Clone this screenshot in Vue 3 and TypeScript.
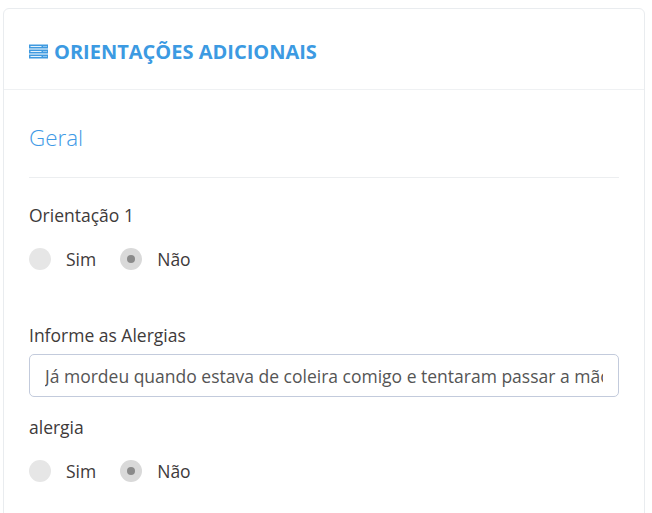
<script setup lang="ts">
const radios = [
  { label: 'Sim', checked: false },
  { label: 'Não', checked: true },
]
const groupsA = 'Orientação 1'
const groupsB = 'alergia'
const value = 'Já mordeu quando estava de coleira comigo e tentaram passar a mão nele'
</script>

<template>
  <div class="page">
    <section class="card">
      <header class="head">
        <svg class="icon" viewBox="0 0 19 15" width="19" height="15" aria-hidden="true">
          <g fill="#3f9ae0">
            <path d="M0 .5h19v4H0zM0 5.5h19v4H0zM0 10.5h19v4H0z" />
          </g>
          <g fill="#e3f1fc">
            <path d="M1.5 2h11v1h-11zM1.5 7h11v1h-11zM1.5 12h11v1h-11z" />
            <path d="M14.5 2h1v1h-1zM16.5 2h1v1h-1zM14.5 7h1v1h-1zM16.5 7h1v1h-1zM14.5 12h1v1h-1zM16.5 12h1v1h-1z" />
          </g>
        </svg>
        <h1 class="title">ORIENTAÇÕES ADICIONAIS</h1>
      </header>
      <div class="body">
        <h2 class="sub">Geral</h2>
        <hr class="rule" />
        <div class="label first">{{ groupsA }}</div>
        <div class="radios">
          <div v-for="r in radios" :key="r.label" class="radio">
            <span class="dot" :class="{ on: r.checked }"></span>
            <span class="rlabel">{{ r.label }}</span>
          </div>
        </div>
        <div class="label second">Informe as Alergias</div>
        <input class="field" type="text" :value="value" readonly />
        <div class="label third">{{ groupsB }}</div>
        <div class="radios">
          <div v-for="r in radios" :key="r.label" class="radio">
            <span class="dot" :class="{ on: r.checked }"></span>
            <span class="rlabel">{{ r.label }}</span>
          </div>
        </div>
      </div>
    </section>
  </div>
</template>

<style>
html, body { margin: 0; background: #fff; overflow: hidden; }
</style>

<style scoped>
.page {
  width: 652px;
  height: 513px;
  overflow: hidden;
  padding: 8px 7px 0 3px;
  box-sizing: border-box;
  font-family: "Open Sans", sans-serif;
  color: #3e3a3a;
}
.card {
  border: 1px solid #e9ecef;
  border-radius: 6px;
  height: 540px;
  box-sizing: border-box;
  background: #fff;
}
.head {
  display: flex;
  align-items: center;
  gap: 6px;
  padding: 6px 25px 0;
  box-sizing: content-box;
  height: 74px;
  border-bottom: 1px solid #eff1f3;
}
.icon { flex: none; margin-top: -2px; }
.title {
  margin: 0;
  font-size: 20px;
  font-weight: 700;
  color: #3c9ae2;
  line-height: 24px;
}
.body { padding: 0 25px; }
.sub {
  margin: 32px 0 0;
  font-size: 22.4px;
  font-weight: 300;
  line-height: 32px;
  color: #3f9ae6;
}
.rule {
  border: 0;
  border-top: 1px solid #eceef0;
  margin: 23px 0 0;
}
.label { font-size: 17.5px; line-height: 24px; }
.first { margin-top: 25px; }
.second { margin-top: 52px; }
.third { margin-top: 18px; }
.radios { display: flex; gap: 23px; margin-top: 20px; }
.radio { display: flex; align-items: center; height: 24px; }
.dot {
  position: relative;
  width: 22px;
  height: 22px;
  border-radius: 50%;
  background: #e6e6e6;
  margin-right: 15px;
  flex: none;
}
.dot.on { background: #d9d9d9; }
.dot.on::after {
  content: "";
  position: absolute;
  left: 7px;
  top: 7px;
  width: 8px;
  height: 8px;
  border-radius: 50%;
  background: #8a8a8a;
}
.rlabel { font-size: 17.5px; line-height: 24px; margin-right: 1px; }
.field {
  display: block;
  width: 100%;
  box-sizing: border-box;
  height: 43px;
  margin-top: 7px;
  padding: 0 15px;
  border: 1px solid #c3cbdc;
  border-radius: 5px;
  font-family: inherit;
  font-size: 17.5px;
  color: #555;
  background: #fff;
  outline: none;
}
</style>
